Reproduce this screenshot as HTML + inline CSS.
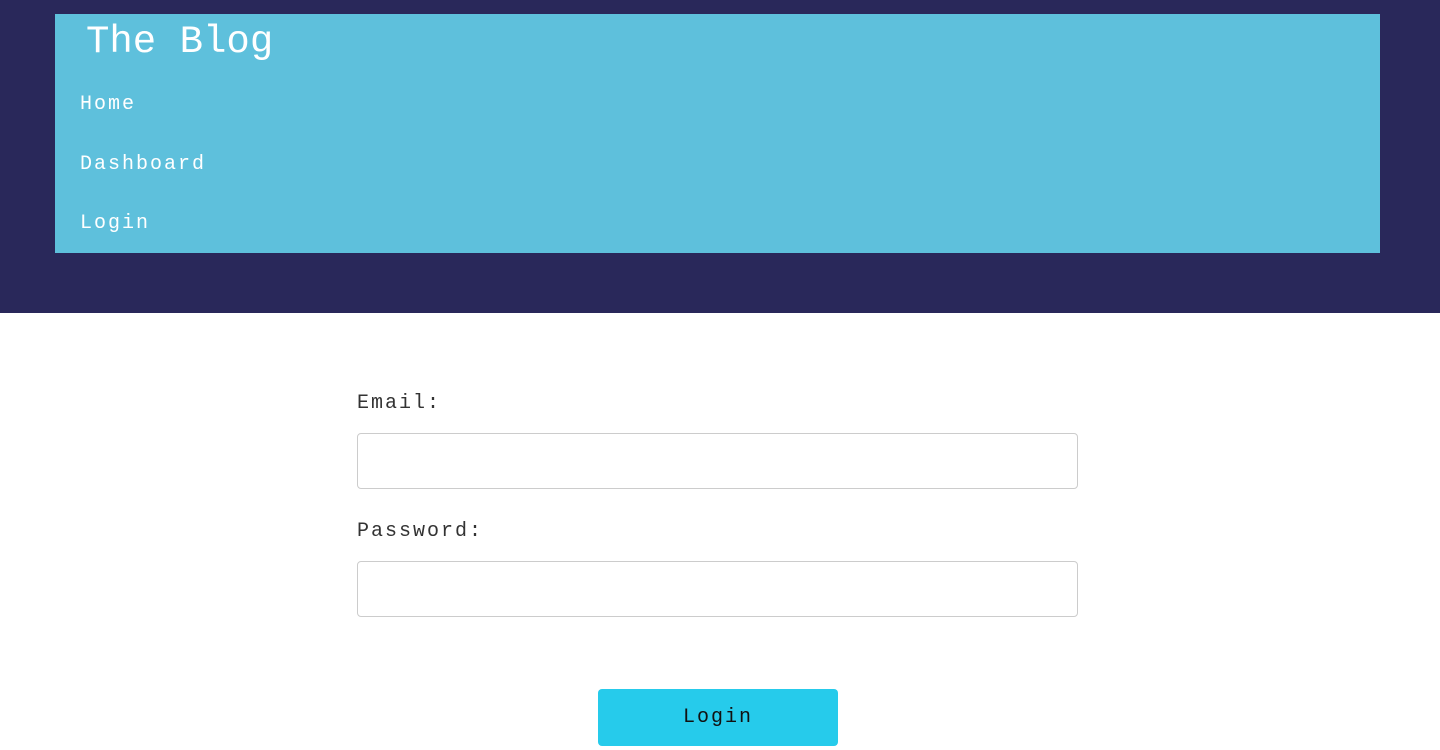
<!DOCTYPE html>
<html><head><style>
body{margin:0;width:1440px;height:750px;overflow:hidden;background:#fff;font-family:"Liberation Mono",monospace;}
header{position:absolute;left:0;top:0;width:1440px;height:313px;background:#29285a;}
.box{position:absolute;left:55px;top:14px;width:1325px;height:239px;background:#5ec0dc;color:#fff;}
.t{position:absolute;left:31px;top:6px;font-size:39px;line-height:44px;}
.n{position:absolute;left:25px;font-size:20px;letter-spacing:2px;line-height:24px;}
.lbl{position:absolute;left:357px;font-size:20px;letter-spacing:2px;color:#333;line-height:24px;}
.in{position:absolute;left:357px;width:719px;height:54px;border:1px solid #ccc;border-radius:4px;}
.btn{position:absolute;left:598px;top:689px;width:240px;height:57px;background:#26cbeb;border-radius:4px;text-align:center;line-height:57px;font-size:20px;letter-spacing:2px;color:#111;}
</style></head><body>
<header><div class="box">
<div class="t">The Blog</div>
<div class="n" style="top:79px">Home</div>
<div class="n" style="top:139px">Dashboard</div>
<div class="n" style="top:198px">Login</div>
</div></header>
<div class="lbl" style="top:392px">Email:</div>
<div class="in" style="top:433px"></div>
<div class="lbl" style="top:520px">Password:</div>
<div class="in" style="top:561px"></div>
<div class="btn">Login</div>
</body></html>
